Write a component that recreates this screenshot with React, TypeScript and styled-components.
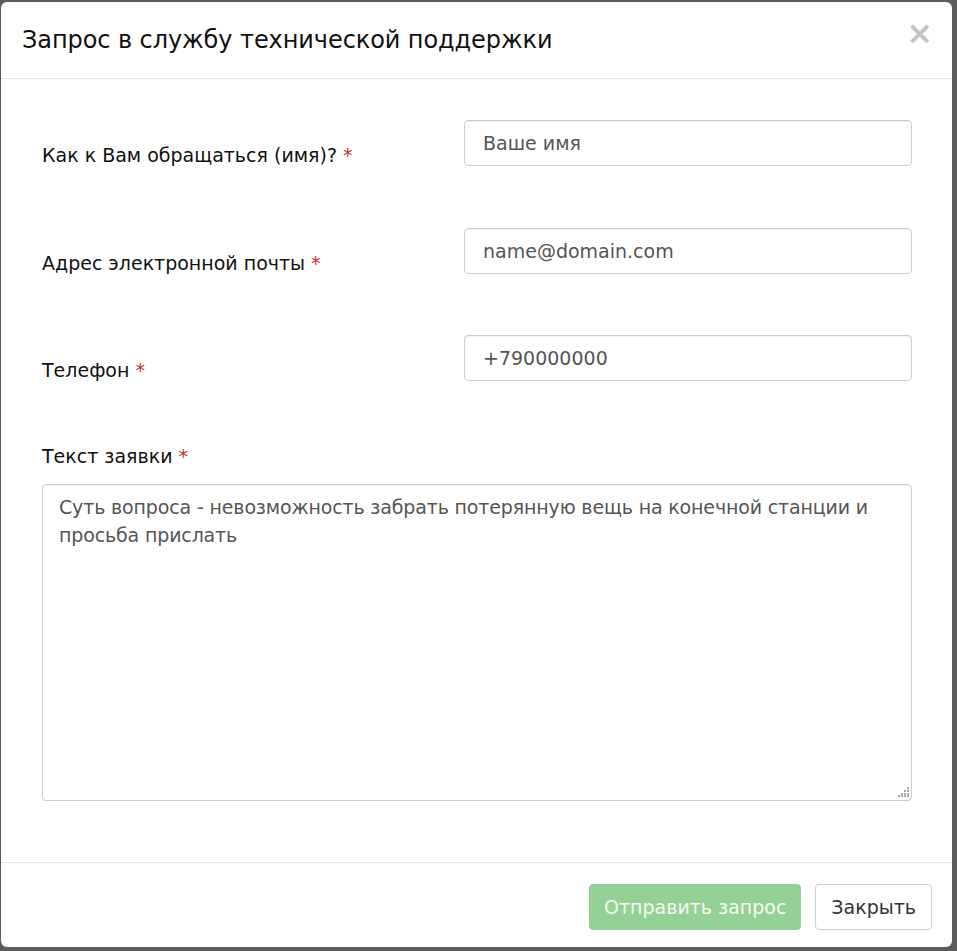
import React from "react";
import styled, { createGlobalStyle } from "styled-components";

const Global = createGlobalStyle`
  html, body { margin: 0; padding: 0; }
  body {
    background: #5b5b5b;
    font-family: "DejaVu Sans", Verdana, sans-serif;
  }
  * { box-sizing: border-box; }
`;

const Backdrop = styled.div`
  height: 951px;
  padding: 2px 5px 4px 1px;
  display: flex;
`;

const Modal = styled.div`
  flex: 1;
  background: #fff;
  border-radius: 6px;
  display: flex;
  flex-direction: column;
  overflow: hidden;
`;

const Header = styled.div`
  height: 77px;
  padding: 0 19px 0 21px;
  border-bottom: 1px solid #e5e5e5;
  display: flex;
  align-items: center;
  justify-content: space-between;
`;

const Title = styled.h4`
  margin: 0;
  font-size: 24px;
  font-weight: normal;
  color: #111;
  letter-spacing: -0.08px;
`;

const CloseX = styled.button`
  border: 0;
  background: none;
  padding: 0;
  font-family: "DejaVu Sans", sans-serif;
  font-size: 32px;
  font-weight: bold;
  line-height: 1;
  color: #c4c4c4;
  cursor: pointer;
  margin-top: -14px;
`;

const Body = styled.div`
  flex: 1;
  padding: 41px 40px 0 41px;
  display: flex;
  flex-direction: column;
`;

const Row = styled.div`
  display: grid;
  grid-template-columns: 1fr 448px;
  grid-template-rows: 46px;
  column-gap: 20px;
  margin-bottom: 61.5px;
`;

const Label = styled.label<{ $top?: number }>`
  display: block;
  padding-top: ${(p) => p.$top ?? 22}px;
  font-size: 19px;
  line-height: 26px;
  color: #111;
`;

const Req = styled.span`
  color: #c9302c;
  margin-left: 6px;
`;

const Input = styled.input`
  width: 100%;
  height: 46px;
  border: 1px solid #ccc;
  border-radius: 4px;
  padding: 0 18px;
  font-family: "DejaVu Sans", sans-serif;
  font-size: 19px;
  color: #555;
  box-shadow: inset 0 1px 1px rgba(0, 0, 0, 0.06);
  outline: none;
  &::placeholder { color: #555; opacity: 1; }
`;

const Block = styled.div`
  display: flex;
  flex-direction: column;
`;

const AreaWrap = styled.div`
  position: relative;
  margin-top: 15px;
`;

const TextArea = styled.textarea`
  display: block;
  width: 100%;
  height: 317px;
  border: 1px solid #ccc;
  border-radius: 4px;
  padding: 8px 16px;
  font-family: "DejaVu Sans", sans-serif;
  font-size: 19px;
  line-height: 28.5px;
  letter-spacing: -0.15px;
  color: #555;
  resize: none;
  outline: none;
  box-shadow: inset 0 1px 1px rgba(0, 0, 0, 0.06);
`;

const Grip = styled.svg`
  position: absolute;
  right: 2px;
  bottom: 4px;
  width: 12px;
  height: 11px;
  pointer-events: none;
`;

const Footer = styled.div`
  height: 85px;
  border-top: 1px solid #e5e5e5;
  padding: 21px 20px 0 0;
  display: flex;
  justify-content: flex-end;
  align-items: flex-start;
  gap: 14px;
`;

const Button = styled.button<{ $primary?: boolean }>`
  height: 46px;
  padding: 0 ${(p) => (p.$primary ? 14 : 15)}px;
  border-radius: 4px;
  font-family: "DejaVu Sans", sans-serif;
  font-size: 19px;
  border: 1px solid ${(p) => (p.$primary ? "#95d195" : "#ccc")};
  background: ${(p) => (p.$primary ? "#95d195" : "#fff")};
  color: ${(p) => (p.$primary ? "#f4fbf4" : "#333")};
`;

const dots: [number, number][] = [
  [9, 1],
  [6, 4], [9, 4],
  [3, 7], [6, 7], [9, 7],
  [0, 9], [3, 9], [6, 9], [9, 9],
];

export default function App() {
  return (
    <>
      <Global />
      <Backdrop>
        <Modal>
          <Header>
            <Title>Запрос в службу технической поддержки</Title>
            <CloseX aria-label="close">×</CloseX>
          </Header>
          <Body>
            <Row>
              <Label>
                Как к Вам обращаться (имя)?<Req>*</Req>
              </Label>
              <Input placeholder="Ваше имя" />
            </Row>
            <Row>
              <Label>
                Адрес электронной почты<Req>*</Req>
              </Label>
              <Input placeholder="name@domain.com" />
            </Row>
            <Row>
              <Label>
                Телефон<Req>*</Req>
              </Label>
              <Input placeholder="+790000000" />
            </Row>
            <Block>
              <Label $top={0}>
                Текст заявки<Req>*</Req>
              </Label>
              <AreaWrap>
                <TextArea defaultValue="Суть вопроса - невозможность забрать потерянную вещь на конечной станции и просьба прислать" />
                <Grip viewBox="0 0 12 11">
                  {dots.map(([x, y], i) => (
                    <rect key={i} x={x} y={y} width="2" height="2" fill="#a8a8a8" />
                  ))}
                </Grip>
              </AreaWrap>
            </Block>
          </Body>
          <Footer>
            <Button $primary disabled>
              Отправить запрос
            </Button>
            <Button>Закрыть</Button>
          </Footer>
        </Modal>
      </Backdrop>
    </>
  );
}
